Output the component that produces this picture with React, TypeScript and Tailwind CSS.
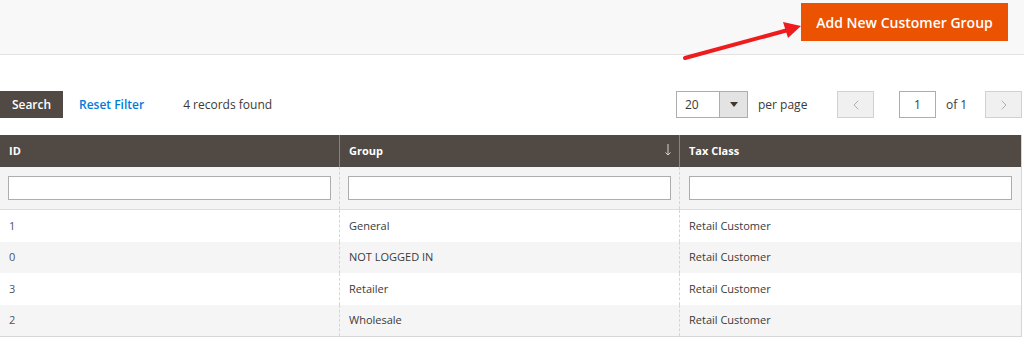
import { ChevronLeft, ChevronRight } from 'lucide-react';

const rows = [
  { id: '1', group: 'General', tax: 'Retail Customer' },
  { id: '0', group: 'NOT LOGGED IN', tax: 'Retail Customer' },
  { id: '3', group: 'Retailer', tax: 'Retail Customer' },
  { id: '2', group: 'Wholesale', tax: 'Retail Customer' },
];

export default function App() {
  return (
    <div className="relative w-[1024px] h-[337px] overflow-hidden bg-white text-[#3a3a3a] font-['Open_Sans',sans-serif]">
      {/* Page actions */}
      <div className="h-[55px] bg-[#f8f8f8] border-b border-[#e3e3e3] flex justify-end pt-[3px] pr-[16px]">
        <button className="h-[38px] w-[207px] bg-[#eb5202] border border-[#eb5202] text-white text-[14px] font-semibold">
          Add New Customer Group
        </button>
      </div>

      {/* Red annotation arrow */}
      <svg className="absolute left-[680px] top-[18px]" width="126" height="46" viewBox="0 0 126 46">
        <line x1="5" y1="40" x2="108" y2="12" stroke="#ee1c1c" strokeWidth="4" strokeLinecap="round" />
        <polygon points="121,8 103,4 108,20" fill="#ee1c1c" />
      </svg>

      {/* Toolbar */}
      <div className="mt-[36px] h-[27px] flex items-center">
        <button className="h-[27px] w-[63px] bg-[#514943] text-white text-[12px] font-semibold">Search</button>
        <span className="ml-[16px] text-[12px] font-semibold text-[#007bdb]">Reset Filter</span>
        <span className="ml-[39px] text-[12px]">4 records found</span>

        <div className="ml-auto flex items-center mr-[2px]">
          <div className="flex h-[27px] w-[72px] border border-[#adadad] bg-white">
            <span className="flex-1 pl-[8px] text-[12px] leading-[25px]">20</span>
            <span className="w-[28px] bg-[#e3e3e3] border-l border-[#adadad] flex items-center justify-center">
              <span className="w-0 h-0 border-l-[4px] border-r-[4px] border-t-[5px] border-l-transparent border-r-transparent border-t-[#41362f]" />
            </span>
          </div>
          <span className="ml-[10px] w-[48px] whitespace-nowrap text-[12px]">per page</span>
          <div className="ml-[31px] h-[27px] w-[37px] bg-[#f0f0f0] border border-[#d1d1d1] flex items-center justify-center">
            <ChevronLeft className="w-[16px] h-[16px] text-[#b0b0b0]" strokeWidth={1.5} />
          </div>
          <div className="ml-[25px] h-[27px] w-[37px] bg-white border border-[#adadad] flex items-center justify-center text-[12px]">
            1
          </div>
          <span className="ml-[10px] w-[20px] whitespace-nowrap text-[12px]">of 1</span>
          <div className="ml-[19px] h-[27px] w-[37px] bg-[#f0f0f0] border border-[#d1d1d1] flex items-center justify-center">
            <ChevronRight className="w-[16px] h-[16px] text-[#b0b0b0]" strokeWidth={1.5} />
          </div>
        </div>
      </div>

      {/* Grid */}
      <div className="mt-[17px] w-[1022px] border-r border-b border-[#d6d6d6] text-[11px]">
        <div className="grid grid-cols-[340px_340px_1fr] h-[32px] bg-[#514943] text-white font-bold">
          <div className="flex items-center px-[9px] border-r border-[#8a837f]">ID</div>
          <div className="flex items-center justify-between pl-[9px] pr-[8px] border-r border-[#8a837f]">
            <span>Group</span>
            <svg width="6" height="12" viewBox="0 0 6 12" className="mt-[-2px]">
              <line x1="3" y1="0" x2="3" y2="11" stroke="#d8d3d0" strokeWidth="1" />
              <polyline points="0.5,8.5 3,11 5.5,8.5" fill="none" stroke="#d8d3d0" strokeWidth="1" />
            </svg>
          </div>
          <div className="flex items-center px-[9px]">Tax Class</div>
        </div>

        <div className="grid grid-cols-[340px_340px_1fr] h-[43px] bg-[#f4f4f4] border-b border-[#dcdcdc]">
          <div className="flex items-center px-[8px] border-r border-dashed border-[#d6d6d6]">
            <div className="w-full h-[24px] bg-white border border-[#adadad]" />
          </div>
          <div className="flex items-center px-[8px] border-r border-dashed border-[#d6d6d6]">
            <div className="w-full h-[24px] bg-white border border-[#adadad]" />
          </div>
          <div className="flex items-center px-[9px]">
            <div className="w-full h-[24px] bg-white border border-[#adadad]" />
          </div>
        </div>

        {rows.map((r, i) => (
          <div
            key={r.id}
            className={`grid grid-cols-[340px_340px_1fr] h-[31.5px] ${i % 2 ? 'bg-[#f5f5f5]' : 'bg-white'}`}
          >
            <div className="flex items-center px-[9px] border-r border-dashed border-[#d6d6d6] text-[#4b5563]">{r.id}</div>
            <div className="flex items-center px-[9px] border-r border-dashed border-[#d6d6d6]">{r.group}</div>
            <div className="flex items-center px-[9px]">{r.tax}</div>
          </div>
        ))}
      </div>
    </div>
  );
}
